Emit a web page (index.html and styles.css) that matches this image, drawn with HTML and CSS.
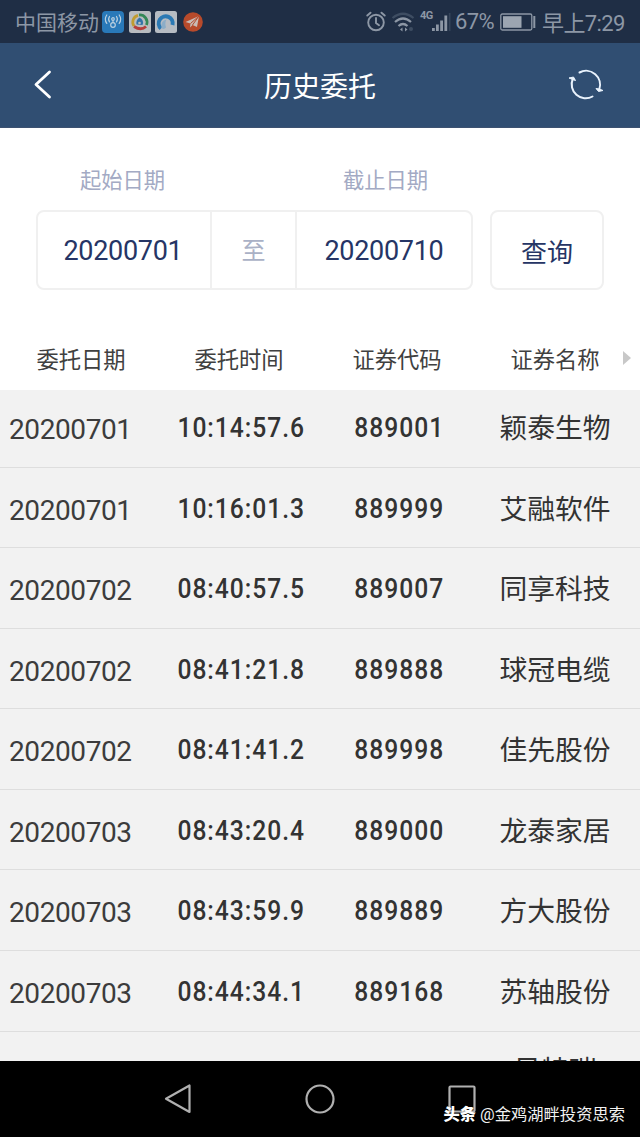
FILE: index.html
```html
<!DOCTYPE html>
<html lang="zh-CN">

<head>
    <meta charset="utf-8">
    <title>历史委托</title>
    <link rel="stylesheet" href="styles.css">
</head>

<body>
    <div class="status-bar">
        <span class="carrier">中国移动</span>
        <div class="apps">
            <svg width="22" height="22" viewBox="0 0 22 22">
                <rect width="22" height="22" rx="4" fill="#2979b9" />
                <g fill="none" stroke="#b9cfe0" stroke-width="1.2" stroke-linecap="round">
                    <circle cx="11" cy="8" r="1.3" />
                    <circle cx="11" cy="14" r="2.3" />
                    <path d="M11 9.5v2M7.5 5.5q-1.8 2.7 0 5.4M14.5 5.5q1.8 2.7 0 5.4M4.8 4q-3 4.2 0 8.4M17.2 4q3 4.2 0 8.4" />
                </g>
            </svg>
            <svg width="22" height="22" viewBox="0 0 22 22">
                <rect width="22" height="22" rx="2.5" fill="#b8bcc0" />
                <g fill="none" stroke-width="2.8">
                    <path d="M5 15A7 7 0 0 1 9 4.3" stroke="#c09c30" />
                    <path d="M10 4A7.3 7.3 0 0 1 17.5 14" stroke="#348757" />
                    <path d="M17 15.5Q12 20 5 15.5" stroke="#b63e3b" />
                </g>
                <path d="M10.5 6.5Q15.5 9 13.5 14L7.5 13.5Q6.5 9.5 10.5 6.5z" fill="#3373a8" />
                <circle cx="10.5" cy="12" r="1.3" fill="#b8bcc0" />
            </svg>
            <svg width="22" height="22" viewBox="0 0 22 22">
                <rect width="22" height="22" rx="2.5" fill="#b6bcc3" />
                <path d="M6 17.5A7 7 0 1 1 17.5 14" fill="none" stroke="#2b79b4" stroke-width="4" />
                <path d="M6.5 17Q5.5 9.5 11.5 8.5Q9.5 12 11 16.5Q9 19 6.5 17z" fill="#8badc8" />
            </svg>
            <svg width="22" height="22" viewBox="0 0 22 22">
                <circle cx="11" cy="11" r="9.8" fill="#b74a2b" />
                <path d="M3.5 11L17 5L15 16L10.5 14L8 16.5L8.5 12.5z" fill="#c9bbb5" />
                <path d="M8.5 12.5L17 5L10.5 14" fill="none" stroke="#b74a2b" stroke-width="1" />
            </svg>
        </div>
        <div class="signals">
            <svg class="alarm" width="20" height="21" viewBox="0 0 20 21">
                <g fill="none" stroke="#8d97a5" stroke-width="1.9" stroke-linecap="round">
                    <circle cx="10" cy="11.5" r="7.8" />
                    <path d="M10 7v5l3 2.2M1.3 4.5L4.5 1.7M18.7 4.5L15.5 1.7" />
                </g>
            </svg>
            <svg class="wifi" width="24" height="21" viewBox="0 0 24 21">
                <g fill="none" stroke-width="2.2">
                    <path d="M1.5 7Q12-1.5 22.5 7" stroke="#3e4d62" />
                    <path d="M4 11Q12 4 20 11M7.5 15Q12 11 16.5 15" stroke="#8d97a5" />
                </g>
                <path d="M9 18.5L11.5 16.5V20.5zM16.5 18.5L14 16.5V20.5z" fill="#8d97a5" />
                <circle cx="20" cy="18" r="2" fill="#3e4d62" />
            </svg>
            <span class="network">4G</span>
            <svg class="bars" width="22" height="21" viewBox="0 0 22 21">
                <path d="M1 17h2.8v3H1zM5 13.5h2.8V20H5zM9.2 9.5H12V20H9.2zM13.4 4.5h2.8V20h-2.8z" fill="#8d97a5" />
                <path d="M17.8 2h1.7v18h-1.7z" fill="#35445a" />
            </svg>
            <span class="percent">67%</span>
            <svg class="battery" width="37" height="18" viewBox="0 0 37 18">
                <rect x=".8" y="1" width="31" height="16" rx="1.5" fill="none" stroke="#8d97a5" stroke-width="1.3" />
                <rect x="3" y="3.2" width="18.5" height="11.6" fill="#9ca5b1" />
                <path d="M34.3 3v12" stroke="#8d97a5" stroke-width="2" />
            </svg>
            <span class="clock">早上7:29</span>
        </div>
    </div>

    <div class="title-bar">
        <svg class="back" width="18" height="30" viewBox="0 0 18 30">
            <path d="M15.5 2L2 14.5L15.5 27" fill="none" stroke="#fff" stroke-width="2.8" stroke-linecap="round" stroke-linejoin="round" />
        </svg>
        <h1 class="title">历史委托</h1>
        <svg class="refresh" width="36" height="32" viewBox="0 0 36 32">
            <path d="M11.5 3.5A14 14 0 0 1 31.3 20.5M24.5 27.5A14 14 0 0 1 4.7 10" fill="none" stroke="#e9f2fc" stroke-width="2" stroke-linecap="round" />
            <path d="M1 9L5.5 8L7.5 11.5L4.5 10.5zM35 21.5L30.5 22.5L28 19.5L31.5 20z" fill="#e9f2fc" stroke="#e9f2fc" stroke-linejoin="round" />
        </svg>
    </div>

    <div class="filter">
        <div class="labels">
            <span class="label">起始日期</span>
            <span class="label">截止日期</span>
        </div>
        <div class="controls">
            <div class="range">
                <span class="date">20200701</span>
                <span class="to">至</span>
                <span class="date">20200710</span>
            </div>
            <button class="query">查询</button>
        </div>
    </div>

    <div class="table-head">
        <span>委托日期</span>
        <span>委托时间</span>
        <span>证券代码</span>
        <span>证券名称</span>
        <svg class="more" width="8" height="14" viewBox="0 0 8 14">
            <path d="M0 0L8 7L0 14z" fill="#c8c8c8" />
        </svg>
    </div>

    <div class="list">
        <div class="rows">
            <div class="row"><span class="day">20200701</span><span class="num">10:14:57.6</span><span class="num">889001</span><span class="name">颖泰生物</span></div>
            <div class="row"><span class="day">20200701</span><span class="num">10:16:01.3</span><span class="num">889999</span><span class="name">艾融软件</span></div>
            <div class="row"><span class="day">20200702</span><span class="num">08:40:57.5</span><span class="num">889007</span><span class="name">同享科技</span></div>
            <div class="row"><span class="day">20200702</span><span class="num">08:41:21.8</span><span class="num">889888</span><span class="name">球冠电缆</span></div>
            <div class="row"><span class="day">20200702</span><span class="num">08:41:41.2</span><span class="num">889998</span><span class="name">佳先股份</span></div>
            <div class="row"><span class="day">20200703</span><span class="num">08:43:20.4</span><span class="num">889000</span><span class="name">龙泰家居</span></div>
            <div class="row"><span class="day">20200703</span><span class="num">08:43:59.9</span><span class="num">889889</span><span class="name">方大股份</span></div>
            <div class="row"><span class="day">20200703</span><span class="num">08:44:34.1</span><span class="num">889168</span><span class="name">苏轴股份</span></div>
            <div class="row"><span class="day"></span><span class="num"></span><span class="num"></span><span class="name">贝特瑞</span></div>
        </div>
    </div>

    <div class="nav-bar">
        <svg width="28" height="32" viewBox="0 0 28 32">
            <path d="M25.5 2.5V29L2 15.8z" fill="none" stroke="#b0b0b0" stroke-width="2.2" stroke-linejoin="round" />
        </svg>
        <svg width="32" height="32" viewBox="0 0 32 32">
            <circle cx="16" cy="16" r="13.5" fill="none" stroke="#b0b0b0" stroke-width="2.2" />
        </svg>
        <svg width="28" height="32" viewBox="0 0 28 32">
            <rect x="1.5" y="3.5" width="25" height="25" rx="1" fill="none" stroke="#b0b0b0" stroke-width="2.2" />
        </svg>
        <div class="watermark"><b>头条</b> @金鸡湖畔投资思索</div>
    </div>
</body>

</html>
```

FILE: styles.css
```css
* {
    box-sizing: border-box;
}

body {
    margin: 0;
    width: 640px;
    height: 1137px;
    overflow: hidden;
    display: flex;
    flex-direction: column;
    background: #fff;
    font-family: Roboto, "Noto Sans CJK SC", sans-serif;
    color: #333;
}

svg {
    display: block;
    flex: none;
}

.status-bar {
    height: 43px;
    flex: none;
    display: flex;
    align-items: center;
    padding: 0 15px;
    background: #1f2e45;
    color: #8d97a5;
    white-space: nowrap;
}

.carrier {
    width: 87px;
    margin-top: -2px;
    font-size: 21px;
}

.apps {
    display: flex;
    gap: 4.7px;
}

.signals {
    display: flex;
    align-items: center;
    margin-left: auto;
}

.wifi {
    margin-left: 5px;
}

.network {
    width: 13px;
    margin: -12px 0 0 5px;
    font-size: 11px;
    font-weight: bold;
    letter-spacing: -0.5px;
}

.bars {
    margin-left: -2px;
}

.percent {
    width: 40px;
    margin-left: 2px;
    font-size: 22px;
    letter-spacing: -0.6px;
}

.battery {
    margin-left: 5px;
}

.clock {
    width: 83px;
    margin: -2px 0 0 5px;
    font-size: 22px;
    letter-spacing: -0.6px;
}

.title-bar {
    height: 85px;
    flex: none;
    display: flex;
    align-items: center;
    justify-content: space-between;
    padding: 0 36px 0 34px;
    background: #304e72;
    border-bottom: 1px solid #3d5271;
}

.title {
    margin: 6px 0 0 20px;
    font-size: 28px;
    font-weight: 400;
    line-height: 40px;
    color: #fff;
}

.filter {
    height: 202px;
    flex: none;
    padding: 36px 36px 0;
}

.labels {
    display: flex;
    gap: 88px;
    height: 46px;
    margin-left: -1px;
}

.label {
    width: 175px;
    padding-top: 2px;
    line-height: 30px;
    text-align: center;
    font-size: 21.3px;
    color: #a3aac4;
}

.controls {
    display: flex;
    justify-content: space-between;
}

.range {
    display: grid;
    grid-template-columns: 172px 87px 1fr;
    width: 437px;
    height: 80px;
    border: 2px solid #f0f0f0;
    border-radius: 8px;
    line-height: 76px;
    text-align: center;
}

.date {
    padding: 1px 2px 0 0;
    font-size: 27px;
    letter-spacing: -0.3px;
    color: #263565;
}

.date:last-child {
    padding-right: 0;
}

.to {
    border: solid #f0f0f0;
    border-width: 0 2px;
    padding-top: 1px;
    font-size: 24px;
    color: #aab1c6;
}

.query {
    width: 114px;
    height: 80px;
    padding: 0;
    border: 2px solid #f0f0f0;
    border-radius: 8px;
    background: #fff;
    font: 26px Roboto, "Noto Sans CJK SC", sans-serif;
    color: #263565;
}

.table-head {
    height: 60px;
    flex: none;
    display: grid;
    grid-template-columns: repeat(4, 158px) 8px;
    margin-left: 2px;
    line-height: 60px;
    text-align: center;
    font-size: 22.3px;
    color: #404040;
}

.more {
    margin: 21px 0 0 -11px;
}

.list {
    height: 671px;
    flex: none;
    overflow: hidden;
    background: #f2f2f2;
}

/* list is scrolled slightly under the header */
.rows {
    margin-top: -3px;
}

.row {
    height: 80.57px;
    display: grid;
    grid-template-columns: repeat(4, 158px);
    padding-left: 2px;
    border-bottom: 1px solid #dedede;
    line-height: 81px;
    text-align: center;
    white-space: nowrap;
}

.row:last-child {
    line-height: 76px;
}

.day {
    padding: 2px 0 0 7px;
    text-align: left;
    font-size: 28px;
    letter-spacing: -0.4px;
    color: #3c3c3c;
}

/* narrow digits with loose spacing */
.num {
    padding-left: 5px;
    font-size: 28px;
    font-weight: 500;
    letter-spacing: 1.1px;
    transform: scaleX(0.88);
}

.name {
    padding-top: 1px;
    font-size: 27.8px;
}

.nav-bar {
    position: relative;
    height: 76px;
    flex: none;
    display: flex;
    justify-content: center;
    gap: 112px;
    padding-top: 22px;
    background: #000;
}

.watermark {
    position: absolute;
    right: 15px;
    bottom: 10px;
    font-size: 16.3px;
    line-height: 24px;
    white-space: nowrap;
    color: #f2f2f2;
}

.watermark b {
    font-weight: 900;
    color: #fff;
}
```
